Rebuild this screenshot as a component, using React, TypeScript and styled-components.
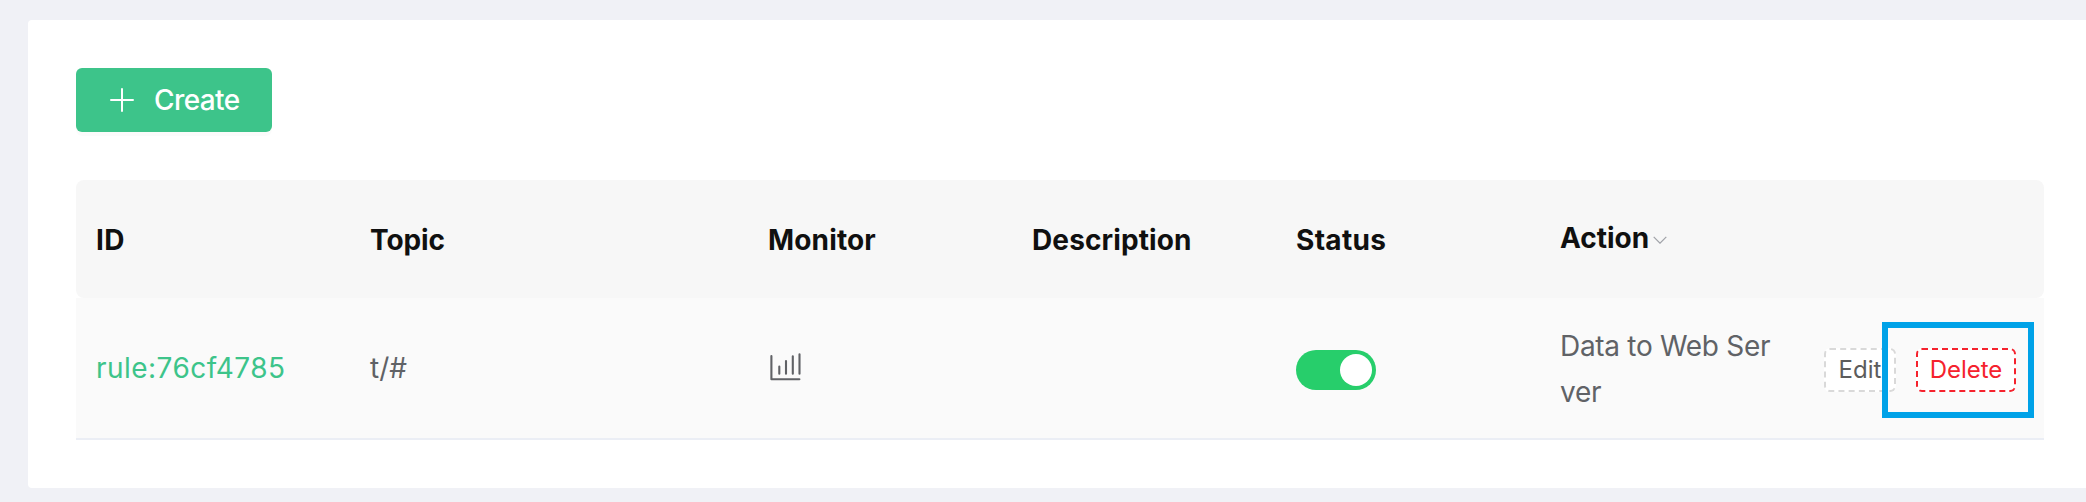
import React from 'react';
import styled, { createGlobalStyle } from 'styled-components';

const GlobalStyle = createGlobalStyle`
  * { box-sizing: border-box; }
  body {
    margin: 0;
    background: #f0f1f6;
    font-family: Inter, 'Liberation Sans', sans-serif;
    overflow: hidden;
  }
`;

const Page = styled.main`
  height: 502px;
  padding: 20px 0 14px 28px;
`;

const Card = styled.section`
  height: 468px;
  padding: 48px 42px 48px 48px;
  background: #fff;
  border-radius: 4px 0 0 4px;
`;

const CreateButton = styled.button`
  display: flex;
  align-items: center;
  width: 196px;
  height: 64px;
  padding: 0 0 0 34px;
  border: 0;
  border-radius: 6px;
  background: #3dc48a;
  box-shadow: 0 4px 0 rgba(0, 0, 0, 0.016);
  color: #fff;
  font: 500 28px/42px Inter, 'Liberation Sans', sans-serif;
`;

const PlusIcon = styled.svg`
  width: 24px;
  height: 24px;
  margin: 0 20px 1px 0;
  fill: none;
  stroke: #fff;
  stroke-width: 2;
  stroke-linecap: round;
`;

const Table = styled.div`
  margin-top: 48px;
`;

const Row = styled.div`
  display: grid;
  grid-template-columns: 274px 398px 264px 264px 264px 264px 240px;
  align-items: center;
`;

const HeaderRow = styled(Row)`
  height: 118px;
  padding-top: 2px;
  background: #f7f7f7;
  border-radius: 8px;
  color: #101010;
  font-size: 28px;
  font-weight: 700;
`;

const BodyRow = styled(Row)`
  height: 142px;
  background: #fafafa;
  border-bottom: 2px solid #ebeef5;
  color: #606266;
  font-size: 28px;
`;

const Cell = styled.div`
  display: flex;
  align-items: center;
  padding-left: 20px;
  line-height: 46px;
  white-space: nowrap;
`;

const SortableCell = styled(Cell)`
  padding-bottom: 4px;
`;

const ActionCell = styled(Cell)`
  padding-top: 2px;
`;

const Label = styled.span<{ $spacing?: number }>`
  letter-spacing: ${({ $spacing = 0 }) => $spacing}px;
`;

const RuleLink = styled.a`
  color: #3dc48a;
`;

const Chevron = styled.svg`
  width: 14px;
  height: 8px;
  margin: 3px 0 0 4px;
  fill: none;
  stroke: #a0a2a8;
  stroke-width: 1.2;
`;

const MonitorIcon = styled.svg`
  width: 34px;
  height: 28px;
  margin-bottom: 2px;
  fill: none;
  stroke: #606266;
  stroke-width: 2.1;
  stroke-linecap: round;
  stroke-linejoin: round;
`;

const Switch = styled.button`
  display: flex;
  justify-content: flex-end;
  width: 80px;
  height: 40px;
  margin-top: 4px;
  padding: 4px;
  border: 0;
  border-radius: 20px;
  background: #27ce6b;
`;

const Knob = styled.span`
  width: 32px;
  height: 32px;
  border-radius: 50%;
  background: #fff;
`;

const Operations = styled(Cell)`
  gap: 20px;
  padding-top: 4px;
`;

const SmallButton = styled.button<{ $danger?: boolean }>`
  display: flex;
  align-items: center;
  justify-content: center;
  width: ${({ $danger }) => ($danger ? 100 : 72)}px;
  height: 44px;
  padding: 0;
  border: 2px dashed ${({ $danger }) => ($danger ? '#f5222d' : '#d9d9d9')};
  border-radius: 6px;
  background: #fff;
  color: ${({ $danger }) => ($danger ? '#f5222d' : '#5c5c5c')};
  font: 400 24px/36px Inter, 'Liberation Sans', sans-serif;
`;

const HighlightAnchor = styled.div`
  position: relative;
  display: flex;
`;

const Highlight = styled.div`
  position: absolute;
  top: -26px;
  left: -34px;
  width: 152px;
  height: 96px;
  border: 6px solid #00a2e8;
  pointer-events: none;
`;

export default function App() {
  return (
    <Page>
      <GlobalStyle />
      <Card>
        <CreateButton>
          <PlusIcon viewBox="0 0 24 24">
            <path d="M12 1v22M1 12h22" />
          </PlusIcon>
          <Label $spacing={-0.6}>Create</Label>
        </CreateButton>
        <Table>
          <HeaderRow>
            <Cell><Label $spacing={0.4}>ID</Label></Cell>
            <Cell><Label $spacing={-0.1}>Topic</Label></Cell>
            <Cell><Label $spacing={0.15}>Monitor</Label></Cell>
            <Cell><Label $spacing={0.12}>Description</Label></Cell>
            <Cell><Label $spacing={0.3}>Status</Label></Cell>
            <SortableCell>
              <Label>Action</Label>
              <Chevron viewBox="0 0 14 8"><path d="M.7.8 7 7.2 13.3.8" /></Chevron>
            </SortableCell>
            <Cell />
          </HeaderRow>
          <BodyRow>
            <Cell><RuleLink><Label $spacing={0.46}>rule:76cf4785</Label></RuleLink></Cell>
            <Cell><Label>t/#</Label></Cell>
            <Cell>
              <MonitorIcon viewBox="0 0 34 28">
                <path d="M3.4 3v23.2h28M11.3 13.5v7.3M18 8v12.8M24.8 3.2v17.6M31.5 1.2v19.6" />
              </MonitorIcon>
            </Cell>
            <Cell />
            <Cell><Switch aria-label="Status"><Knob /></Switch></Cell>
            <ActionCell>
              <Label $spacing={-0.3}>Data to Web Ser<br />ver</Label>
            </ActionCell>
            <Operations>
              <SmallButton><Label>Edit</Label></SmallButton>
              <HighlightAnchor>
                <SmallButton $danger><Label>Delete</Label></SmallButton>
                <Highlight />
              </HighlightAnchor>
            </Operations>
          </BodyRow>
        </Table>
      </Card>
    </Page>
  );
}
